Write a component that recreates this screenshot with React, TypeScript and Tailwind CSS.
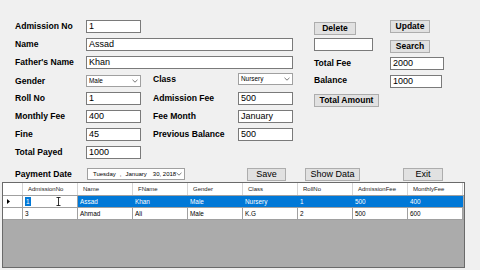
import type { ReactNode } from 'react'

const columns = ['AdmissionNo', 'Name', 'FName', 'Gender', 'Class', 'RollNo', 'AdmissionFee', 'MonthlyFee']

const rows = [
  ['1', 'Assad', 'Khan', 'Male', 'Nursery', '1', '500', '400'],
  ['3', 'Ahmad', 'Ali', 'Male', 'K.G', '2', '500', '600'],
]

function Label({ children, className = '' }: { children: ReactNode; className?: string }) {
  return (
    <div className={`flex h-[13px] items-center whitespace-nowrap text-[8.6px] font-bold ${className}`}>
      {children}
    </div>
  )
}

function TextBox({ value = '', className = '' }: { value?: string; className?: string }) {
  return (
    <div
      className={`flex h-[13px] items-center border border-[#7a7a7a] bg-white pl-[2px] text-[9px] leading-none whitespace-nowrap ${className}`}
    >
      {value}
    </div>
  )
}

function Chevron() {
  return (
    <svg width="6" height="4" viewBox="0 0 6 4" className="shrink-0">
      <polyline points="0.5,0.8 3,3.2 5.5,0.8" fill="none" stroke="#555" strokeWidth="0.8" />
    </svg>
  )
}

function Combo({ value, className = '' }: { value: string; className?: string }) {
  return (
    <div
      className={`flex h-[12px] items-center justify-between border border-[#a0a0a0] bg-white pl-[2px] pr-[2px] text-[6.4px] leading-none ${className}`}
    >
      <span>{value}</span>
      <Chevron />
    </div>
  )
}

function Button({ children, className = '' }: { children: ReactNode; className?: string }) {
  return (
    <div
      className={`flex h-[13px] items-center justify-center border border-[#adadad] bg-[#e1e1e1] leading-none whitespace-nowrap ${className}`}
    >
      {children}
    </div>
  )
}

export default function App() {
  return (
    <div className="relative h-[270px] w-[480px] overflow-hidden bg-[#f0f0f0] font-['Liberation_Sans',Arial,sans-serif] text-black">
      {/* Form fields */}
      <div className="grid grid-cols-[15px_71px_55px_12px_85px_55px_21px_76px_54px] grid-rows-[repeat(8,18px)] pt-[20px]">
        {/* row 1 */}
        <Label className="col-start-2 row-start-1">Admission No</Label>
        <TextBox value="1" className="col-start-3 row-start-1" />
        <Button className="col-start-8 row-start-1 mt-[2px] w-[42px] text-[8.5px] font-bold">Delete</Button>
        <Button className="col-start-9 row-start-1 h-[12px] w-[40px] text-[8.5px] font-bold">Update</Button>

        {/* row 2 */}
        <Label className="col-start-2 row-start-2">Name</Label>
        <TextBox value="Assad" className="col-span-4 col-start-3 row-start-2" />
        <TextBox className="col-start-8 row-start-2 w-[59px]" />
        <Button className="col-start-9 row-start-2 mt-[2px] h-[12px] w-[40px] text-[8.5px] font-bold">Search</Button>

        {/* row 3 */}
        <Label className="col-start-2 row-start-3">Father's Name</Label>
        <TextBox value="Khan" className="col-span-4 col-start-3 row-start-3" />
        <Label className="col-start-8 row-start-3 mt-[1px]">Total Fee</Label>
        <TextBox value="2000" className="col-start-9 row-start-3 mt-[1px] w-[54px]" />

        {/* row 4 */}
        <Label className="col-start-2 row-start-4 mt-[1px]">Gender</Label>
        <Combo value="Male" className="col-start-3 row-start-4 mt-[1px]" />
        <Label className="col-start-5 row-start-4 -mt-[1px]">Class</Label>
        <Combo value="Nursery" className="col-start-6 row-start-4 -mt-[1px]" />
        <Label className="col-start-8 row-start-4">Balance</Label>
        <TextBox value="1000" className="col-start-9 row-start-4 mt-[1px] w-[52px]" />

        {/* row 5 */}
        <Label className="col-start-2 row-start-5">Roll No</Label>
        <TextBox value="1" className="col-start-3 row-start-5" />
        <Label className="col-start-5 row-start-5">Admission Fee</Label>
        <TextBox value="500" className="col-start-6 row-start-5" />
        <Button className="col-start-8 row-start-5 mt-[2px] w-[65px] text-[8.5px] font-bold">Total Amount</Button>

        {/* row 6 */}
        <Label className="col-start-2 row-start-6">Monthly Fee</Label>
        <TextBox value="400" className="col-start-3 row-start-6" />
        <Label className="col-start-5 row-start-6">Fee Month</Label>
        <TextBox value="January" className="col-start-6 row-start-6" />

        {/* row 7 */}
        <Label className="col-start-2 row-start-7">Fine</Label>
        <TextBox value="45" className="col-start-3 row-start-7" />
        <Label className="col-start-5 row-start-7">Previous Balance</Label>
        <TextBox value="500" className="col-start-6 row-start-7" />

        {/* row 8 */}
        <Label className="col-start-2 row-start-8">Total Payed</Label>
        <TextBox value="1000" className="col-start-3 row-start-8" />
      </div>

      {/* Payment date + actions */}
      <div className="mt-[4px] flex h-[12px] items-center pl-[15px]">
        <Label className="w-[72px]">Payment Date</Label>
        <div className="flex h-[12px] w-[98px] items-center overflow-hidden border border-[#a0a0a0] bg-white pl-[5px] pr-[2px] text-[6px] leading-none whitespace-nowrap">
          <span>Tuesday</span>
          <span className="ml-[4px]">,</span>
          <span className="ml-[4px]">January</span>
          <span className="ml-[6px]">30, 2018</span>
          <span className="ml-auto">
            <Chevron />
          </span>
        </div>
        <Button className="ml-[62px] h-[12px] w-[39px] text-[9px]">Save</Button>
        <Button className="ml-[19px] h-[12px] w-[55px] text-[9px]">Show Data</Button>
        <Button className="ml-[43px] h-[12px] w-[40px] text-[9px]">Exit</Button>
      </div>

      {/* Data grid */}
      <div className="mt-[2px] ml-[2px] h-[86px] w-[463px] border border-[#6a6a6a] bg-[#ababab]">
        <div className="flex h-[13px] border-b border-[#a0a0a0] bg-white text-[6px] text-[#222]">
          <div className="w-[20px] shrink-0 border-r border-[#d5d5d5]" />
          {columns.map((c) => (
            <div key={c} className="flex w-[55px] shrink-0 items-center border-r border-[#d5d5d5] pl-[5px] whitespace-nowrap">
              {c}
            </div>
          ))}
        </div>
        {rows.map((r, ri) => {
          const selected = ri === 0
          return (
            <div key={ri} className="flex h-[12px] border-b border-[#a0a0a0] text-[6.4px]">
              <div className="flex w-[20px] shrink-0 items-center border-r border-[#a0a0a0] bg-white pl-[4px]">
                {selected && (
                  <svg width="3" height="5" viewBox="0 0 3 5">
                    <polygon points="0,0 3,2.5 0,5" fill="#000" />
                  </svg>
                )}
              </div>
              {r.map((v, ci) => {
                if (selected && ci === 0) {
                  return (
                    <div key={ci} className="relative flex w-[55px] shrink-0 items-center border-r border-[#a0a0a0] bg-white pl-[2px]">
                      <span className="bg-[#0078d7] px-[1px] text-white">{v}</span>
                      <svg width="5" height="9" viewBox="0 0 5 9" className="absolute top-[1px] left-[33px]">
                        <path d="M0.5 0.5 H4.5 M2.5 0.5 V8.5 M0.5 8.5 H4.5" fill="none" stroke="#000" strokeWidth="0.8" />
                      </svg>
                    </div>
                  )
                }
                return (
                  <div
                    key={ci}
                    className={`flex w-[55px] shrink-0 items-center border-r pl-[2px] whitespace-nowrap ${
                      selected ? 'border-[#0078d7] bg-[#0078d7] text-white' : 'border-[#a0a0a0] bg-white text-black'
                    }`}
                  >
                    {v}
                  </div>
                )
              })}
            </div>
          )
        })}
      </div>
    </div>
  )
}
